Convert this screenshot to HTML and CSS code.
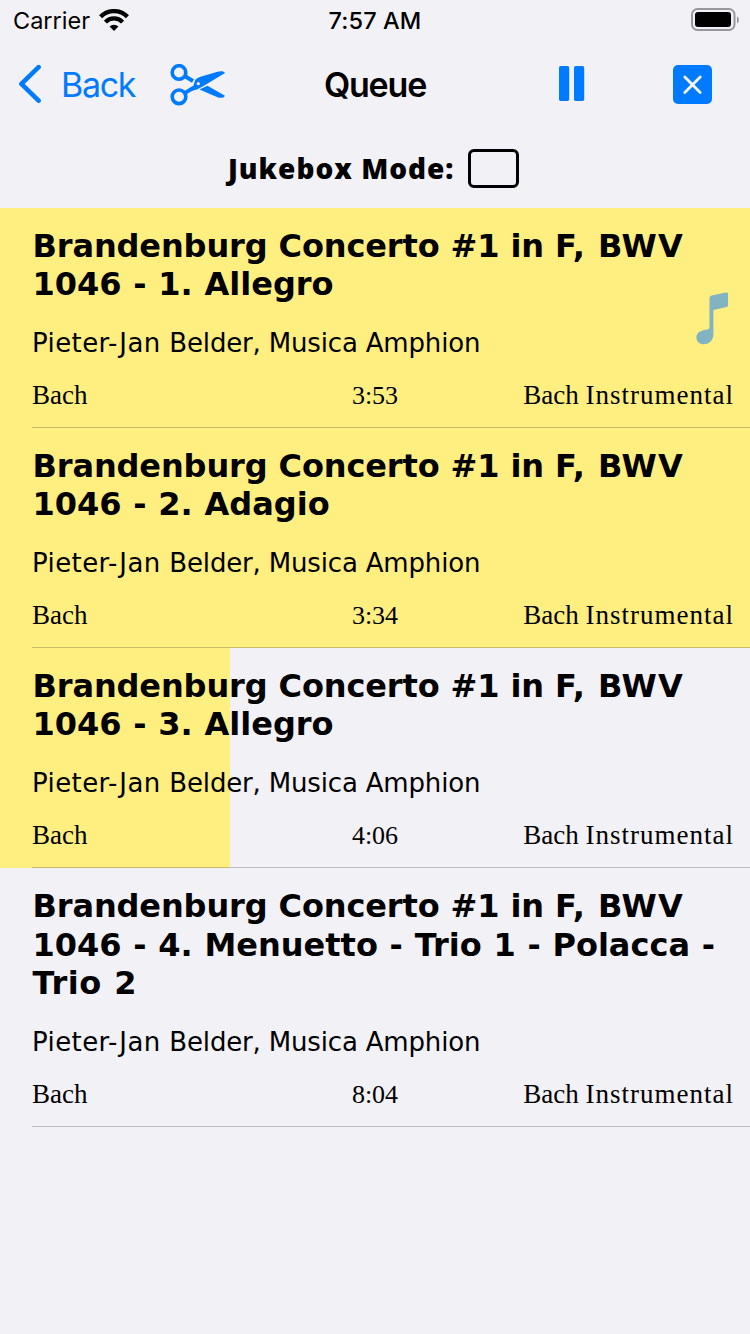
FILE: index.html
```html
<!DOCTYPE html>
<html lang="en">
<head>
<meta charset="utf-8">
<title>Queue</title>
<link rel="stylesheet" href="styles.css">
</head>
<body>
<header class="status">
  <div class="status-left"><span class="carrier">Carrier</span>
    <svg class="wifi" width="30" height="22" viewBox="0 0 30 22"><g fill="none" stroke="#000" stroke-width="4.3"><path d="M1.6 7.8a18.6 18.6 0 0 1 26.8 0"/><path d="M6.4 13.1a11.8 11.8 0 0 1 17.2 0"/></g><path d="M15 22l-4.4-4.5a6.3 6.3 0 0 1 8.8 0z"/></svg>
  </div>
  <span class="clock">7:57 AM</span>
  <div class="status-right">
    <svg width="49" height="24" viewBox="0 0 49 24"><rect x="1" y="1" width="42.5" height="21" rx="5.5" fill="none" stroke="#98979b" stroke-width="2"/><rect x="4" y="4" width="36" height="15" rx="3" fill="#000"/><path d="M46 8.2q2 1 2 3.6t-2 3.6z" fill="#98979b"/></svg>
  </div>
</header>
<nav class="bar">
  <div class="bar-left">
    <svg width="24" height="40" viewBox="0 0 24 40"><path d="M20.6 3.2L3.4 19.9l17.200 16.800" fill="none" stroke="#007aff" stroke-width="4.600" stroke-linecap="round" stroke-linejoin="round"/></svg>
    <span class="back">Back</span>
    <svg class="scissors" width="56" height="42" viewBox="0 0 56 42"><g fill="none" stroke="#007aff" stroke-width="3.600"><circle cx="9" cy="8.500" r="6.800"/><circle cx="9" cy="32.800" r="6.800"/><path d="M14.500 12l8.500 5" stroke-width="4"/></g><g fill="#007aff"><path d="M14 27.200L23.500 21.500L25 16.500C26 14.600 28 13.800 30.500 12.800L47.500 7.700C51 6.800 54 7 55 8.900L33.500 22L27 25.500Q23.500 26.300 21.500 27.200L16 30.500Z"/><path d="M29.500 25.600L37.500 21.800L55 31.700C53.500 34.200 50.500 34.200 47.500 33.200Z"/></g><circle cx="28.300" cy="19.700" r="1.600" fill="#f2f1f6"/></svg>
  </div>
  <h1 class="heading">Queue</h1>
  <div class="bar-right">
    <svg width="26" height="36" viewBox="0 0 26 36" fill="#007aff"><rect width="10.200" height="35" rx="1.700"/><rect x="15" width="10.200" height="35" rx="1.700"/></svg>
    <svg width="39" height="39" viewBox="0 0 39 39"><rect width="39" height="39" rx="5" fill="#007aff"/><path d="M11.800 12l15.400 15.400M27.200 12L11.800 27.400" stroke="#f7f9ff" stroke-width="2.800" stroke-linecap="round"/></svg>
  </div>
</nav>
<section class="mode"><span class="mode-label">Jukebox Mode:</span><span class="checkbox"></span></section>
<main class="queue">
  <article class="track downloaded">
    <h2 class="title"><span class="work">Brandenburg Concerto #1 in <span class="key">F, BWV</span></span><br>1046 - 1. Allegro</h2>
    <p class="artist"><span class="soloist">Pieter-Jan </span>Belder, Musica Amphion</p>
    <div class="meta"><span class="album">Bach</span><span class="time">3:53</span><span class="genre">Bach <span class="kind">Instrumental</span></span></div>
    <svg class="note" width="34" height="54" viewBox="0 0 34 54"><path d="M13.500 6q0-2 2-2.500L30 .5Q32 0 32 2v11.200q0 1.500-1.500 1.800l-13.100 3V42c0 6-4 10.300-9.500 10.300C3.500 52.300.4 49.500.4 45.500c0-4 3.300-6.500 7.600-7.400l3.500-.7q2-.4 2-2.500z" fill="#82b3c0"/></svg>
  </article>
  <article class="track downloaded">
    <h2 class="title"><span class="work">Brandenburg Concerto #1 in <span class="key">F, BWV</span></span><br>1046 - 2. Adagio</h2>
    <p class="artist"><span class="soloist">Pieter-Jan </span>Belder, Musica Amphion</p>
    <div class="meta"><span class="album">Bach</span><span class="time">3:34</span><span class="genre">Bach <span class="kind">Instrumental</span></span></div>
  </article>
  <article class="track loading">
    <h2 class="title"><span class="work">Brandenburg Concerto #1 in <span class="key">F, BWV</span></span><br>1046 - 3. Allegro</h2>
    <p class="artist"><span class="soloist">Pieter-Jan </span>Belder, Musica Amphion</p>
    <div class="meta"><span class="album">Bach</span><span class="time">4:06</span><span class="genre">Bach <span class="kind">Instrumental</span></span></div>
  </article>
  <article class="track tall">
    <h2 class="title"><span class="work">Brandenburg Concerto #1 in <span class="key">F, BWV</span></span><br>1046 - 4. Menuetto - Trio 1 - Polacca -<br><span class="last-line">Trio 2</span></h2>
    <p class="artist"><span class="soloist">Pieter-Jan </span>Belder, Musica Amphion</p>
    <div class="meta"><span class="album">Bach</span><span class="time">8:04</span><span class="genre">Bach <span class="kind">Instrumental</span></span></div>
  </article>
</main>
</body>
</html>
```

FILE: styles.css
```css
* { box-sizing: border-box; }
body { margin: 0; width: 750px; height: 1334px; overflow: hidden; background: #f2f1f6; color: #000; font-family: Inter, "Liberation Sans", sans-serif; }
h1, h2, p { margin: 0; }
svg { display: block; flex: none; }
.status { display: grid; grid-template-columns: 1fr auto 1fr; height: 40px; align-items: center; padding: 0 10px; }
.status-left { display: flex; align-items: center; gap: 9px; padding-left: 3px; }
.carrier { font-size: 23.500px; letter-spacing: 0; }
.clock { font-size: 23.500px; font-weight: 500; letter-spacing: 0.100px; }
.status-right { display: flex; justify-content: flex-end; }
.bar { display: grid; grid-template-columns: 1fr auto 1fr; height: 88px; align-items: center; padding: 0 18px; }
.bar-left { display: flex; align-items: center; }
.back { margin-left: 19px; width: 76px; font-size: 34px; letter-spacing: -1.300px; color: #007aff; }
.scissors { position: relative; top: 1px; margin-left: 33px; }
.heading { font-size: 34px; font-weight: 600; letter-spacing: -1.200px; }
.bar-right { display: flex; justify-content: flex-end; align-items: center; gap: 88px; padding-right: 20px; }
.mode { display: flex; align-items: center; height: 80px; padding-left: 228px; gap: 14px; }
.mode-label { width: 226px; font: 800 28px/36px "Open Sans", sans-serif; letter-spacing: 1px; white-space: nowrap; }
.checkbox { width: 51px; height: 39px; border: 3px solid #000; border-radius: 6px; }
.track { position: relative; display: flex; flex-direction: column; height: 220px; padding: 19px 17px 0 32px; }
.track::after { content: ""; position: absolute; left: 32px; right: 0; bottom: 0; height: 1px; background: rgba(60, 60, 67, 0.290); }
.tall { height: 259px; }
.downloaded { background: #ffee80; }
.loading { background: linear-gradient(90deg, #ffee80 229.700px, transparent 229.700px); }
.title { min-height: 77px; padding-left: 0.500px; font: bold 32px/38px "DejaVu Sans", sans-serif; white-space: nowrap; word-spacing: 0.600px; }
.tall .title { line-height: 38.500px; }
.work { letter-spacing: -0.120px; word-spacing: 0; }
.key { letter-spacing: 1px; }
.last-line { letter-spacing: 0.600px; }
.artist { margin-top: 23px; font: 26px/32px "DejaVu Sans", sans-serif; white-space: nowrap; letter-spacing: -0.170px; }
.soloist { letter-spacing: 0.420px; }
.meta { display: grid; grid-template-columns: 1fr auto 1fr; align-items: baseline; margin: 19px 0 0 -15px; font: 27px/34px "Liberation Serif", serif; }
.album { padding-left: 15px; }
.time { font-size: 26px; }
.genre { text-align: right; }
.kind { letter-spacing: 1px; margin-right: -1px; }
.note { position: absolute; left: 696px; top: 84px; }
```
